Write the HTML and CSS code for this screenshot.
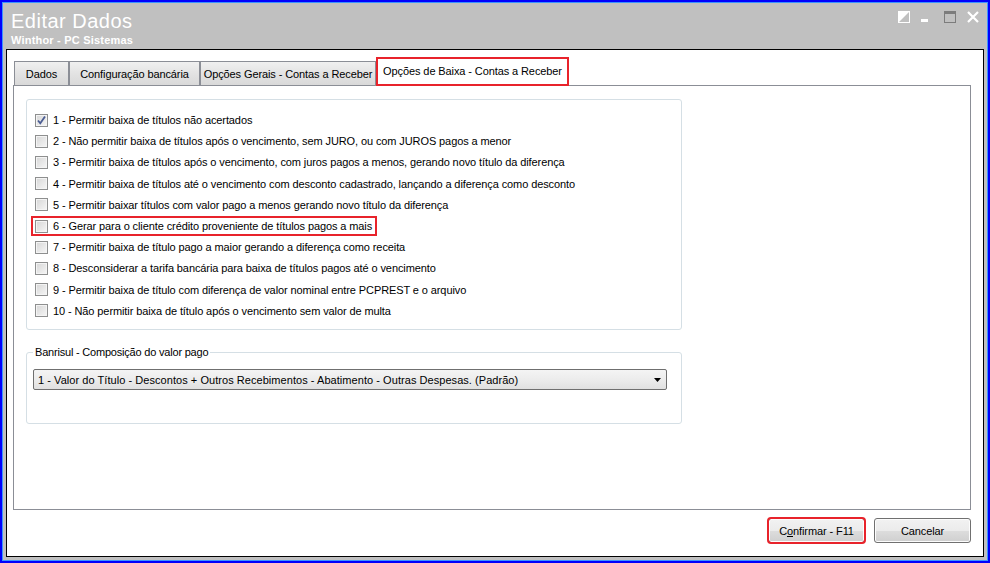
FILE: index.html
```html
<!DOCTYPE html>
<html lang="pt-BR">
<head>
<meta charset="utf-8">
<title>Editar Dados</title>
<link rel="stylesheet" href="styles.css">
</head>
<body>
<div class="window">
  <div class="titlebar">
    <div class="titles">
      <div class="title">Editar Dados</div>
      <div class="subtitle">Winthor - PC Sistemas</div>
    </div>
    <svg class="controls" width="81" height="12" viewBox="0 0 81 12">
      <rect x="0.5" y="0.5" width="11" height="11" fill="none" stroke="#fff"/>
      <polygon points="0,0 12,0 0,12" fill="#fff"/>
      <rect x="23" y="8" width="7" height="3" fill="#fff"/>
      <rect x="46.5" y="0.5" width="11" height="11" fill="none" stroke="#7c7c7c"/>
      <rect x="46" y="0" width="12" height="3" fill="#7c7c7c"/>
      <path d="M70 1 L80 11 M80 1 L70 11" stroke="#fff" stroke-width="2.2"/>
    </svg>
  </div>
  <div class="client">
    <div class="tabs">
      <div class="tab tab-dados">Dados</div>
      <div class="tab tab-config">Configuração bancária</div>
      <div class="tab tab-gerais">Opções Gerais - Contas a Receber</div>
      <div class="tab tab-active">Opções de Baixa - Contas a Receber</div>
    </div>
    <div class="tabpanel">
      <div class="group options">
        <div class="row"><span class="cb checked"><svg width="11" height="11" viewBox="0 0 11 11"><path d="M2 5.5 L4.3 8.3 L9 1.5" fill="none" stroke="#4b5d93" stroke-width="1.8"/></svg></span><span class="label">1 - Permitir baixa de títulos não acertados</span></div>
        <div class="row"><span class="cb"></span><span class="label">2 - Não permitir baixa de títulos após o vencimento, sem JURO, ou com JUROS pagos a menor</span></div>
        <div class="row"><span class="cb"></span><span class="label">3 - Permitir baixa de títulos após o vencimento, com juros pagos a menos, gerando novo título da diferença</span></div>
        <div class="row"><span class="cb"></span><span class="label">4 - Permitir baixa de títulos até o vencimento com desconto cadastrado, lançando a diferença como desconto</span></div>
        <div class="row"><span class="cb"></span><span class="label">5 - Permitir baixar títulos com valor pago a menos gerando novo título da diferença</span></div>
        <div class="row"><span class="highlight"><span class="cb"></span><span class="label">6 - Gerar para o cliente crédito proveniente de títulos pagos a mais</span></span></div>
        <div class="row"><span class="cb"></span><span class="label">7 - Permitir baixa de título pago a maior gerando a diferença como receita</span></div>
        <div class="row"><span class="cb"></span><span class="label">8 - Desconsiderar a tarifa bancária para baixa de títulos pagos até o vencimento</span></div>
        <div class="row"><span class="cb"></span><span class="label">9 - Permitir baixa de título com diferença de valor nominal entre PCPREST e o arquivo</span></div>
        <div class="row"><span class="cb"></span><span class="label">10 - Não permitir baixa de título após o vencimento sem valor de multa</span></div>
      </div>
      <fieldset class="group banrisul">
        <legend>Banrisul - Composição do valor pago</legend>
        <div class="select">
          <span class="select-text">1 - Valor do Título - Descontos + Outros Recebimentos - Abatimento - Outras Despesas. (Padrão)</span>
          <svg width="7" height="4" viewBox="0 0 7 4"><polygon points="0,0 7,0 3.5,4" fill="#000"/></svg>
        </div>
      </fieldset>
    </div>
    <div class="buttons">
      <button class="btn btn-confirm">C<u>o</u>nfirmar - F11</button>
      <button class="btn">Cancelar</button>
    </div>
  </div>
</div>
</body>
</html>
```

FILE: styles.css
```css
* { box-sizing: border-box; }
html, body { margin: 0; padding: 0; }
body {
  font-family: "Liberation Sans", Arial, sans-serif;
  font-size: 11px;
  letter-spacing: -0.1px;
  color: #000;
  background: #0000ff;
}
.window {
  width: 990px;
  height: 563px;
  border: 2px solid #0000fc;
  background: #c0c0c0;
  box-shadow: inset 0 0 0 1px #3c94ff;
  display: flex;
  flex-direction: column;
}
.titlebar {
  height: 47px;
  padding: 8px 9px 0 9px;
  display: flex;
  justify-content: space-between;
  align-items: flex-start;
}
.title {
  font-size: 20px;
  line-height: 20px;
  letter-spacing: 0.5px;
  color: #fff;
  margin-top: 1px;
}
.subtitle {
  margin-top: 3px;
  font-size: 11px;
  line-height: 13px;
  font-weight: bold;
  letter-spacing: 0.2px;
  color: #fff;
}
.controls { margin-top: 1px; display: block; }
.client {
  margin: 0 4px 4px 4px;
  height: 508px;
  background: #fff;
  border: 1px solid #000;
  padding: 7px 12px 0 6px;
  display: flex;
  flex-direction: column;
}
.tabs {
  display: flex;
  align-items: flex-end;
  height: 28px;
  margin-left: 1px;
  position: relative;
  z-index: 1;
}
.tab {
  height: 24px;
  border: 1px solid #8b8e96;
  border-bottom: none;
  background: linear-gradient(#f0f0f0, #e3e3e3 50%, #d9d9d9);
  display: flex;
  align-items: center;
  justify-content: center;
  white-space: nowrap;
  padding-top: 1px;
}
.tab-dados { width: 55px; }
.tab-config { width: 131px; }
.tab-gerais { width: 176px; }
.tab-active {
  width: 193px;
  height: 29px;
  margin-bottom: -1px;
  background: #fff;
  border: 2px solid #e8232b;
  padding-top: 0;
  padding-bottom: 2px;
}
.tabpanel {
  width: 958px;
  height: 425px;
  border: 1px solid #8b8e96;
  padding: 13px 0 0 12px;
}
.group {
  width: 656px;
  border: 1px solid #d5dfe5;
  border-radius: 3px;
}
.options {
  height: 231px;
  padding: 9.5px 0 0 8px;
}
.row {
  height: 21.2px;
  display: flex;
  align-items: center;
  white-space: nowrap;
}
.cb {
  width: 13px;
  height: 13px;
  flex: none;
  border: 1px solid #8e8f8f;
  background: linear-gradient(135deg, #d6d6d6, #f6f6f6);
  box-shadow: inset 0 0 0 1px #f4f4f4;
  margin-right: 5px;
  display: flex;
  align-items: center;
  justify-content: center;
}
.highlight {
  display: inline-flex;
  align-items: center;
  height: 16px;
  padding: 0 3px 0 2px;
  margin-left: -2px;
  outline: 2px solid #e8232b;
}
.banrisul {
  margin: 16px 0 0 0;
  padding: 10px 6px 33px 6px;
}
.banrisul legend {
  padding: 0 2px;
  line-height: 13px;
  font-size: 11px;
  letter-spacing: -0.2px;
}
.select {
  width: 634px;
  height: 21px;
  border: 1px solid #6f6f6f;
  border-radius: 2px;
  background: linear-gradient(#f4f4f4, #ececec 50%, #e0e0e0);
  display: flex;
  align-items: center;
  justify-content: space-between;
  padding: 0 5px 0 4px;
  white-space: nowrap;
}
.select-text { letter-spacing: 0.05px; }
.select svg { display: block; margin-top: 1px; }
.buttons {
  width: 958px;
  margin-top: 8px;
  display: flex;
  justify-content: flex-end;
  gap: 9px;
}
.btn {
  width: 97px;
  height: 25px;
  border: 1px solid #707070;
  border-radius: 3px;
  background: linear-gradient(#f2f2f2, #ebebeb 50%, #dddddd 51%, #cfcfcf);
  font-family: "Liberation Sans", Arial, sans-serif;
  font-size: 11px;
  letter-spacing: -0.1px;
  color: #000;
  padding: 0;
  box-shadow: inset 0 0 0 1px #fcfcfc;
}
.btn-confirm {
  outline: 2px solid #e8232b;
  outline-offset: -1px;
}
```
